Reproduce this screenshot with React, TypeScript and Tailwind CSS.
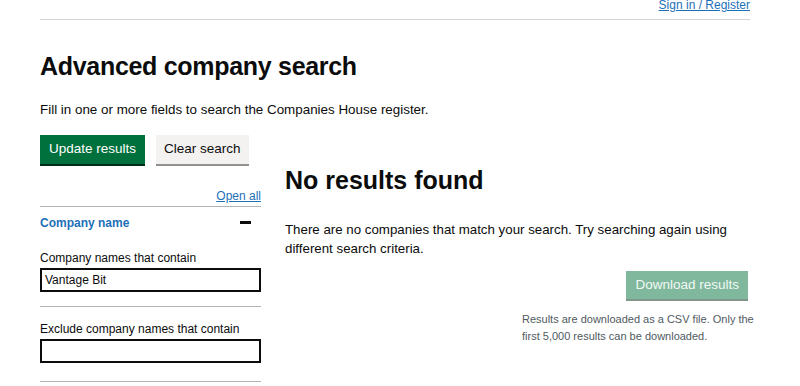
import React from 'react';

const font = { fontFamily: '"Liberation Sans", Arial, sans-serif' };

const Field: React.FC<{ label: string; value?: string; last?: boolean }> = ({ label, value, last }) => (
  <div className={`pt-[14px] border-b border-[#b1b4b6] ${last ? 'pb-[18px]' : 'pb-[14px]'}`}>
    <label className="block text-[12px] leading-[16px] text-[#0b0c0c] mb-[2px]">{label}</label>
    <div className="h-[24px] border-2 border-[#0b0c0c] px-[3px] flex items-center text-[12px] text-[#0b0c0c]">
      {value}
    </div>
  </div>
);

const App: React.FC = () => {
  return (
    <div className="w-[800px] h-[386px] overflow-hidden bg-white text-[#0b0c0c]" style={font}>
      <div className="ml-[40px] w-[710px]">
        {/* top bar */}
        <div className="h-[20px] border-b border-[#d4d4d4] flex justify-end items-start">
          <a className="text-[12px] leading-[12px] -mt-[1px] text-[#1d70b8] underline">Sign in / Register</a>
        </div>

        <h1 className="mt-[31px] text-[25px] leading-[30px] font-bold tracking-[-0.3px]">Advanced company search</h1>
        <p className="mt-[20px] text-[13.4px] leading-[18px]">
          Fill in one or more fields to search the Companies House register.
        </p>

        <div className="flex items-start">
          {/* left column: filters */}
          <div className="w-[221px] shrink-0">
            <div className="mt-[16px] flex gap-[11px]">
              <button className="h-[29px] px-[9px] bg-[#00703c] text-white text-[13.5px] shadow-[0_2px_0_#002d18]">
                Update results
              </button>
              <button className="h-[29px] px-[8px] bg-[#f3f2f1] text-[#0b0c0c] text-[13.5px] shadow-[0_2px_0_#929191]">
                Clear search
              </button>
            </div>
            <div className="mt-[25px] flex justify-end border-b border-[#b1b4b6] pb-[3px]">
              <a className="text-[12px] leading-[14px] text-[#1d70b8] underline">Open all</a>
            </div>
            <div className="pt-[8px] pb-[5px] flex justify-between items-center pr-[10px]">
              <span className="text-[12px] leading-[16px] font-bold text-[#1d70b8]">Company name</span>
              <span className="w-[11px] h-[3px] bg-[#0b0c0c] -mt-[2px]" />
            </div>
            <Field label="Company names that contain" value="Vantage Bit" />
            <Field label="Exclude company names that contain" last />
          </div>

          {/* right column: results */}
          <div className="ml-[24px] flex-1 min-w-0">
            <h2 className="mt-[46px] text-[25px] leading-[30px] font-bold">No results found</h2>
            <p className="mt-[25px] text-[13.3px] leading-[19px]">
              There are no companies that match your search. Try searching again using different search criteria.
            </p>
            <div className="flex justify-end pr-[2px] mt-[13px]">
              <button className="h-[28px] px-[9px] bg-[#80b89d] text-[#f2f8f5] text-[13.5px] shadow-[0_2px_0_#80968b]">
                Download results
              </button>
            </div>
            <p className="ml-[237px] mt-[12px] text-[11px] leading-[17px] text-[#505a5f] w-[240px]">
              Results are downloaded as a CSV file. Only the first 5,000 results can be downloaded.
            </p>
          </div>
        </div>
      </div>
    </div>
  );
};

export default App;
